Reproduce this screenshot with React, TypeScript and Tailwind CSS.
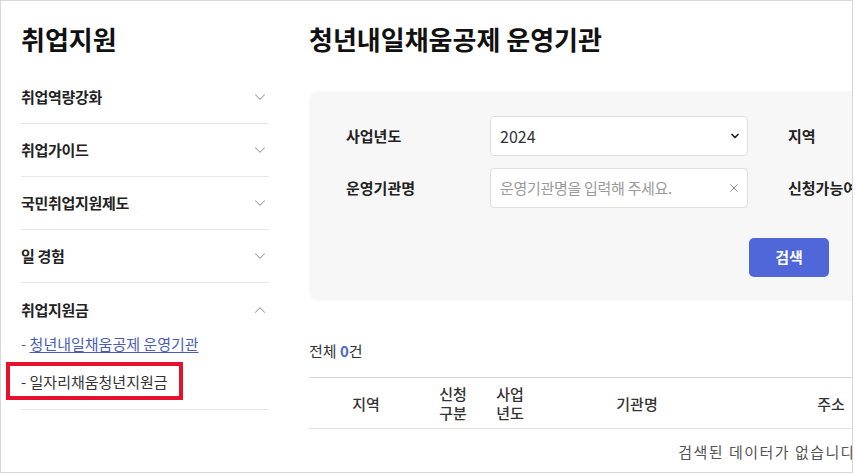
import { ChevronDown, ChevronUp, X } from "lucide-react";

const FONT = "font-['Noto_Sans_CJK_KR','Noto_Sans',sans-serif]";

const menuItems = ["취업역량강화", "취업가이드", "국민취업지원제도", "일 경험"];

function SideMenu() {
  return (
    <aside className="w-[248px] shrink-0">
      <h1 className="mt-[18px] mb-[12px] text-[26px] font-bold leading-[40px] text-[#111]">
        취업지원
      </h1>
      <ul>
        {menuItems.map((item) => (
          <li
            key={item}
            className="flex h-[53px] items-center justify-between border-b border-[#e6e6e6]"
          >
            <span className="text-[15px] font-semibold tracking-[-0.3px] text-[#222]">
              {item}
            </span>
            <ChevronDown className="h-[18px] w-[18px] text-[#999]" strokeWidth={1.4} />
          </li>
        ))}
        <li className="border-b border-[#e6e6e6] pb-[8px]">
          <div className="flex items-center justify-between pt-[17px] pb-[5px] leading-[20px]">
            <span className="text-[15px] font-semibold tracking-[-0.3px] text-[#222]">
              취업지원금
            </span>
            <ChevronUp className="h-[18px] w-[18px] text-[#999]" strokeWidth={1.4} />
          </div>
          <div className="flex h-[38px] items-center text-[15px]">
            <span className="text-[#4a5cb5]">-&nbsp;</span>
            <a href="#" className="text-[#4a5cb5] underline underline-offset-2">
              청년내일채움공제 운영기관
            </a>
          </div>
          <div className="relative flex h-[38px] items-center text-[15px] text-[#333]">
            - 일자리채움청년지원금
            <span className="pointer-events-none absolute -left-[15px] -top-[1px] h-[38px] w-[177px] border-4 border-[#e8112d]" />
          </div>
        </li>
      </ul>
    </aside>
  );
}

function SearchPanel() {
  return (
    <div className="w-[960px] rounded-[10px] bg-[#f7f7f7] px-[37px] pt-[25px] pb-[24px]">
      <div className="grid grid-cols-[144px_258px_40px_144px_258px] gap-y-[12px]">
        <div className="flex h-[40px] items-center text-[15px] font-semibold text-[#222]">
          사업년도
        </div>
        <div className="flex h-[40px] items-center justify-between rounded-[4px] border border-[#dedede] bg-white pl-[9px] pr-[6px] text-[16px] text-[#333]">
          <span>2024</span>
          <ChevronDown className="h-[12px] w-[12px] text-[#222]" strokeWidth={3.5} />
        </div>
        <div />
        <div className="flex h-[40px] items-center text-[15px] font-semibold text-[#222]">
          지역
        </div>
        <div className="flex h-[40px] items-center justify-between rounded-[4px] border border-[#dedede] bg-white pl-[9px] pr-[6px] text-[15px] text-[#333]">
          <span>전체</span>
          <ChevronDown className="h-[12px] w-[12px] text-[#222]" strokeWidth={3.5} />
        </div>

        <div className="flex h-[40px] items-center text-[15px] font-semibold text-[#222]">
          운영기관명
        </div>
        <div className="flex h-[40px] items-center rounded-[4px] border border-[#dedede] bg-white pl-[9px] pr-[6px]">
          <input
            className="min-w-0 flex-1 bg-transparent text-[15px] tracking-[-0.3px] text-[#333] outline-none placeholder:text-[#9a9a9a]"
            placeholder="운영기관명을 입력해 주세요."
          />
          <X className="h-[14px] w-[14px] text-[#8a8a8a]" strokeWidth={1.6} />
        </div>
        <div />
        <div className="flex h-[40px] items-center text-[15px] font-semibold text-[#222]">
          신청가능여부
        </div>
        <div className="flex h-[40px] items-center justify-between rounded-[4px] border border-[#dedede] bg-white pl-[9px] pr-[6px] text-[15px] text-[#333]">
          <span>전체</span>
          <ChevronDown className="h-[12px] w-[12px] text-[#222]" strokeWidth={3.5} />
        </div>
      </div>
      <div className="mt-[30px] flex justify-center">
        <button
          type="button"
          className="h-[39px] w-[80px] rounded-[5px] bg-[#4f67d9] text-[15px] font-bold text-white"
        >
          검색
        </button>
      </div>
    </div>
  );
}

function ResultTable() {
  const headers: string[][] = [
    ["지역"],
    ["신청", "구분"],
    ["사업", "년도"],
    ["기관명"],
    ["주소"],
    ["연락처"],
  ];

  return (
    <div className="w-[922px]">
      <div className="grid h-[52px] grid-cols-[114px_60px_54px_200px_188px_1fr] border-t border-b border-[#d6d6d6] border-b-[#e2e2e2]">
        {headers.map((lines) => (
          <div
            key={lines.join("")}
            className="flex flex-col items-center justify-center text-[15px] font-medium leading-[19px] text-[#333]"
          >
            {lines.map((line) => (
              <span key={line}>{line}</span>
            ))}
          </div>
        ))}
      </div>
      <div className="pt-[11px] text-center text-[15px] leading-[24px] tracking-[1.5px] text-[#555]">
        검색된 데이터가 없습니다.
      </div>
    </div>
  );
}

export default function App() {
  return (
    <div className={`h-[474px] w-[855px] overflow-hidden bg-white ${FONT}`}>
      <div className="flex h-[473px] w-[853px] overflow-hidden border border-[#d8d8d8] pl-[20px]">
        <SideMenu />
        <main className="ml-[40px] shrink-0">
          <h2 className="mt-[20px] mb-[34px] text-[26px] font-bold leading-[36px] text-[#111]">
            청년내일채움공제 운영기관
          </h2>
          <SearchPanel />
          <p className="mt-[38px] mb-[14px] text-[15px] leading-[24px] text-[#333]">
            전체 <span className="font-bold text-[#4f67d9]">0</span>건
          </p>
          <ResultTable />
        </main>
      </div>
    </div>
  );
}
